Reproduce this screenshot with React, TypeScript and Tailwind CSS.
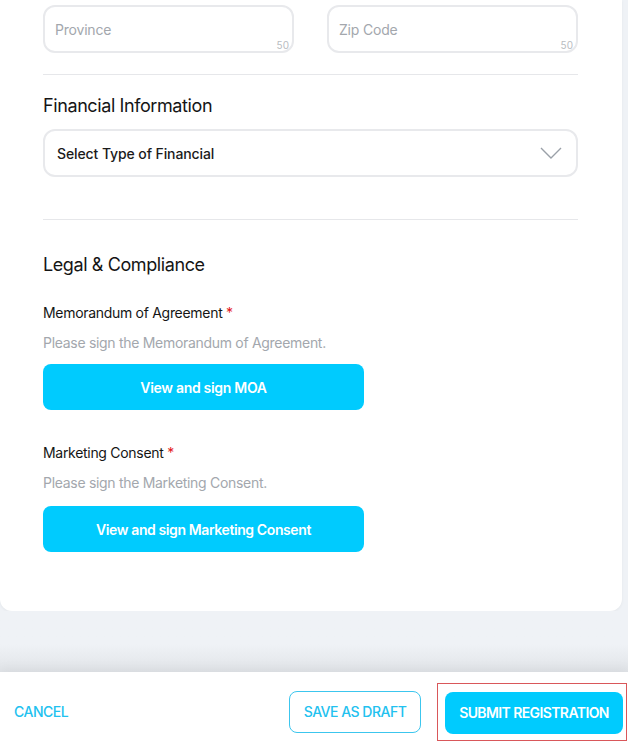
import React from "react";

const font = { fontFamily: "Inter, 'Noto Sans', sans-serif" };

function TextInput({ placeholder }: { placeholder: string }) {
  return (
    <div className="relative h-[48px] rounded-[12px] border-2 border-[#e8e9ec] bg-white flex items-center px-[10px]">
      <span className="text-[14px] text-[#a3a7ad] tracking-[-0.2px]">{placeholder}</span>
      <span className="absolute right-[3px] bottom-[1px] text-[10px] leading-none text-[#b9bcc1]">50</span>
    </div>
  );
}

function Required({ label }: { label: string }) {
  return (
    <div className="text-[14px] leading-[20px] text-[#151515] tracking-[-0.3px]">
      {label} <span className="text-[#e3171b]">*</span>
    </div>
  );
}

export default function App() {
  return (
    <div style={font} className="h-[749px] w-[628px] flex flex-col bg-[#eff2f6] overflow-hidden">
      <div className="flex-1 flex flex-col">
        <div className="mr-[6px] bg-white rounded-b-[12px] shadow-[0_1px_3px_rgba(0,0,0,0.05)] pl-[43px] pr-[44px] pt-[5px] pb-[59px]">
          <div className="grid grid-cols-2 gap-[33px]">
            <TextInput placeholder="Province" />
            <TextInput placeholder="Zip Code" />
          </div>
          <div className="mt-[21px] h-px bg-[#e6e7ea]" />
          <div className="mt-[17px] text-[18px] leading-[28px] text-[#151515] tracking-[-0.4px]">Financial Information</div>
          <div className="mt-[9px] h-[48px] rounded-[12px] border-2 border-[#e8e9ec] flex items-center justify-between pl-[12px] pr-[14px]">
            <span className="text-[14px] font-medium text-[#1b1b1b] tracking-[-0.1px]">Select Type of Financial</span>
            <svg width="22" height="12" viewBox="0 0 22 12" fill="none">
              <polyline points="1,1 11,11 21,1" stroke="#9aa0a8" strokeWidth="1.4" />
            </svg>
          </div>
          <div className="mt-[42px] h-px bg-[#e6e7ea]" />
          <div className="mt-[31px] text-[18px] leading-[28px] text-[#151515] tracking-[-0.4px]">Legal &amp; Compliance</div>
          <div className="mt-[24px]">
            <Required label="Memorandum of Agreement" />
          </div>
          <div className="mt-[10px] text-[14px] leading-[20px] text-[#a3a7ad] tracking-[-0.3px]">Please sign the Memorandum of Agreement.</div>
          <button className="mt-[11px] w-[321px] h-[46px] rounded-[8px] bg-[#00cbfe] text-white text-[14px] font-semibold tracking-[-0.3px]">
            View and sign MOA
          </button>
          <div className="mt-[33px]">
            <Required label="Marketing Consent" />
          </div>
          <div className="mt-[10px] text-[14px] leading-[20px] text-[#a3a7ad] tracking-[-0.3px]">Please sign the Marketing Consent.</div>
          <button className="mt-[13px] w-[321px] h-[46px] rounded-[8px] bg-[#00cbfe] text-white text-[14px] font-semibold tracking-[-0.4px]">
            View and sign Marketing Consent
          </button>
        </div>
        <div className="flex-1 bg-gradient-to-b from-[#eff2f6] from-55% to-[#e1e4e8]" />
      </div>
      <div className="h-[77px] bg-white shadow-[0_-4px_10px_rgba(0,0,0,0.04)] flex items-center pl-[14px] pr-[1px]">
        <span className="text-[14px] font-medium text-[#22c1ef] tracking-[-0.5px] mt-[2px]">CANCEL</span>
        <div className="flex-1" />
        <button className="w-[132px] h-[42px] rounded-[8px] border border-[#3cc6ee] text-[14px] font-medium text-[#22c1ef] tracking-[-0.5px] mt-[2px]">
          SAVE AS DRAFT
        </button>
        <div className="ml-[16px] border border-[#d9575a] pt-[8px] pb-[6px] pl-[7px] pr-[3px] mt-[2px]">
          <button className="w-[178px] h-[42px] rounded-[8px] bg-[#00cbfe] text-white text-[14px] font-semibold tracking-[-0.6px]">
            SUBMIT REGISTRATION
          </button>
        </div>
      </div>
    </div>
  );
}
